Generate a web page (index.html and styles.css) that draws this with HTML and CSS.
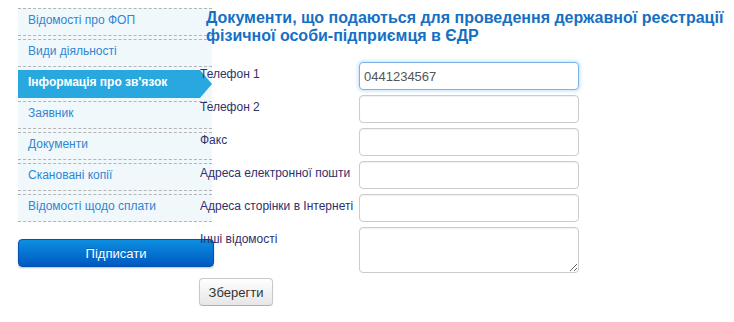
FILE: index.html
```html
<!DOCTYPE html>
<html lang="uk">
<head>
    <meta charset="UTF-8">
    <title>Реєстрація ФОП</title>
    <link rel="stylesheet" href="styles.css">
</head>
<body>
    <div class="page">
        <div class="sidebar">
            <ul class="menu">
                <li><a href="#">Відомості про ФОП</a></li>
                <li><a href="#">Види діяльності</a></li>
                <li class="active"><a href="#">Інформація про зв'язок</a></li>
                <li><a href="#">Заявник</a></li>
                <li><a href="#">Документи</a></li>
                <li><a href="#">Скановані копії</a></li>
                <li><a href="#">Відомості щодо сплати</a></li>
            </ul>
            <button class="sign">Підписати</button>
        </div>

        <div class="main">
            <h1>Документи, що подаються для проведення державної реєстрації<br>фізичної особи-підприємця в ЄДР</h1>
            <form class="form">
                <div class="row">
                    <label for="phone1">Телефон 1</label>
                    <input type="text" id="phone1" class="focused" value="0441234567">
                </div>
                <div class="row">
                    <label for="phone2">Телефон 2</label>
                    <input type="text" id="phone2">
                </div>
                <div class="row">
                    <label for="fax">Факс</label>
                    <input type="text" id="fax">
                </div>
                <div class="row">
                    <label for="email">Адреса електронної пошти</label>
                    <input type="text" id="email">
                </div>
                <div class="row">
                    <label for="site">Адреса сторінки в Інтернеті</label>
                    <input type="text" id="site">
                </div>
                <div class="row">
                    <label for="other">Інші відомості</label>
                    <textarea id="other"></textarea>
                </div>
                <button type="button" class="save">Зберегти</button>
            </form>
        </div>
    </div>
</body>
</html>
```

FILE: styles.css
```css
body {
    margin: 0;
    background: #fff;
    font-family: "Liberation Sans", Arial, sans-serif;
}

.page { display: flex; padding: 8px 0 0 18px; }

/* Left menu */
.sidebar { width: 194px; flex: none; }

.menu {
    list-style: none; margin: 0; padding: 0;
    background: #f1f8fc;
}
.menu li {
    height: 24px; padding: 2px 0 0 10px;
    border-top: 1px dashed #b4b4b4; border-bottom: 1px dashed #b4b4b4;
    margin-bottom: 3px;
    font-size: 12px; line-height: 18px;
}
.menu li:last-child { margin-bottom: 0; }
.menu a { color: #2f86d2; text-decoration: none; }

.menu li.active {
    position: relative; margin-right: 12px;
    background: #29a8e0; border-color: #29a8e0;
}
.menu li.active a { color: #fff; font-weight: bold; }
.menu li.active::after {
    content: ""; position: absolute; left: 100%; top: -1px;
    border-left: 12px solid #29a8e0;
    border-top: 14px solid transparent; border-bottom: 14px solid transparent;
}

.sign {
    display: block; margin-top: 17px;
    width: 196px; height: 28px; box-sizing: border-box;
    background: linear-gradient(to bottom, #0c8fe0, #0058c2);
    border: 1px solid #0452b0; border-radius: 4px;
    box-shadow: 0 1px 2px rgba(0,0,0,0.25);
    color: #fff; font-family: inherit; font-size: 13px;
    text-shadow: 0 -1px 0 rgba(0,0,0,0.2);
}

/* Content */
.main { position: relative; z-index: 1; margin-left: -13px; }

h1 {
    margin: 1px 0 0; padding-left: 7px;
    font-size: 16px; line-height: 18px; font-weight: bold;
    color: #1570c4; white-space: nowrap;
}

.form { margin-top: 17px; }

.row { display: flex; margin-bottom: 5px; }
.row label {
    width: 160px; box-sizing: border-box; padding: 3px 0 0 1px;
    font-size: 12px; line-height: 18px; color: #30306a;
    white-space: nowrap;
}
.row input, .row textarea {
    width: 220px; height: 28px; box-sizing: border-box; margin: 0;
    border: 1px solid #cccccc; border-radius: 4px;
    padding: 0 4px;
    font-family: inherit; font-size: 13px; color: #555;
    box-shadow: inset 0 1px 1px rgba(0,0,0,0.06);
}
.row textarea { height: 46px; padding: 4px; }
.row input.focused {
    border-color: #7db4e8;
    box-shadow: 0 0 4px rgba(82,168,236,0.55);
}

.save {
    width: 74px; height: 28px; box-sizing: border-box;
    background: linear-gradient(to bottom, #ffffff, #e6e6e6);
    border: 1px solid #c8c8c8; border-bottom-color: #b0b0b0; border-radius: 4px;
    box-shadow: 0 1px 1px rgba(0,0,0,0.08);
    font-family: inherit; font-size: 13px; color: #333;
}
```
